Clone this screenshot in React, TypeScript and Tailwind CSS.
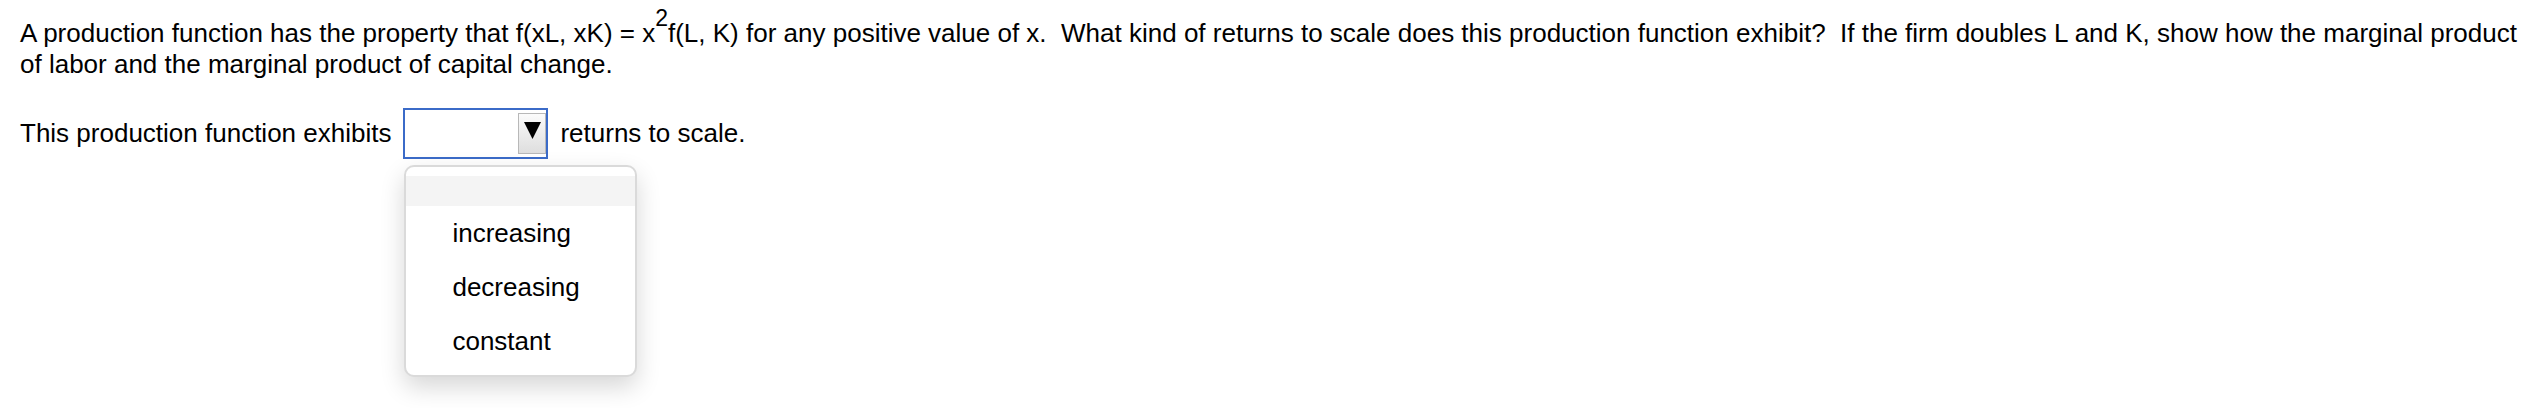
import React from "react";

export default function App() {
  return (
    <div
      className="w-[2548px] h-[408px] bg-white text-black relative overflow-hidden pl-[20px] pt-[18px] text-[26px] leading-[31px]"
      style={{ fontFamily: '"Liberation Sans", Arial, Helvetica, sans-serif' }}
    >
      <div className="whitespace-nowrap">
        A production function has the property that f(xL, xK) = x
        <sup className="text-[23px] top-[-16px]">2</sup>
        f(L, K) for any positive value of x.{"\u00a0 "}What kind of returns to scale does this production function exhibit?{"\u00a0 "}If the firm doubles L and K, show how the marginal product
      </div>
      <div className="whitespace-nowrap">of labor and the marginal product of capital change.</div>

      <div className="mt-[28px] flex items-center whitespace-nowrap">
        <span>This production function exhibits</span>
        <div className="relative ml-[12px]">
          <div className="w-[145px] h-[51px] border-2 border-[#3b6bc8] bg-white flex items-center justify-end">
            <div className="w-[28px] h-[41px] border border-[#b8b8b8] bg-gradient-to-b from-[#fbfbfb] to-[#dedede] flex justify-center pt-[8px]">
              <svg width="17" height="17" viewBox="0 0 17 17">
                <polygon points="0,0 17,0 8.5,17" fill="#000" />
              </svg>
            </div>
          </div>
          <div className="absolute left-[1px] top-[57px] w-[233px] h-[212px] bg-white border-2 border-[#dadada] rounded-[10px] shadow-[0_10px_24px_rgba(0,0,0,0.16)] pt-[9px] overflow-hidden">
            <div className="h-[30px] bg-[#f4f4f4]" />
            <div className="h-[54px] leading-[54px] pl-[46px]">increasing</div>
            <div className="h-[54px] leading-[54px] pl-[46px]">decreasing</div>
            <div className="h-[54px] leading-[54px] pl-[46px]">constant</div>
          </div>
        </div>
        <span className="ml-[12px]">returns to scale.</span>
      </div>
    </div>
  );
}
